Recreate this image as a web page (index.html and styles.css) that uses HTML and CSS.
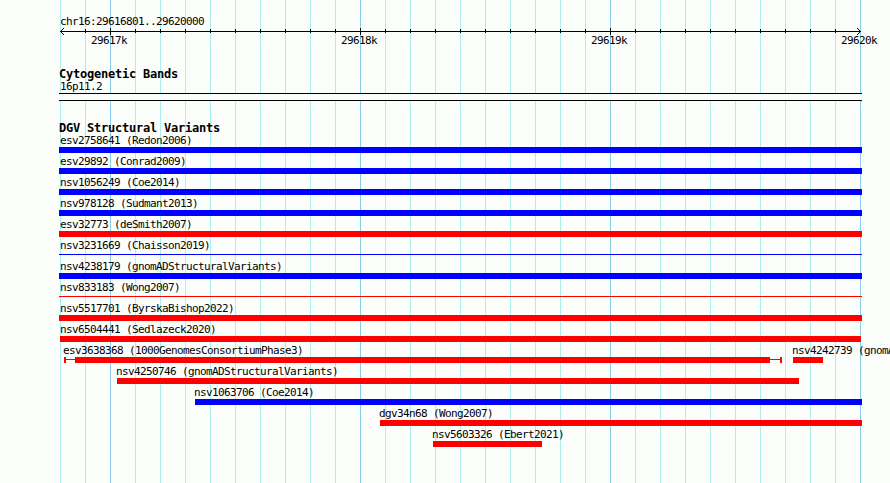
FILE: index.html
```html
<!DOCTYPE html>
<html lang="en">
<head>
    <meta charset="UTF-8">
    <title>chr16:29616801..29620000</title>
    <link rel="stylesheet" href="styles.css">
</head>
<body>
    <div class="browser">
        <div class="ruler">
            <div class="label">chr16:29616801..29620000</div>
            <svg class="axis" width="803" height="8" viewBox="59 27 803 8" shape-rendering="crispEdges">
                <rect x="60" y="31" width="801" height="1"/>
                <!-- minor ticks -->
                <line x1="85" y1="31" x2="860" y2="31" stroke="#000" stroke-width="4" stroke-dasharray="1 24"/>
                <!-- major ticks -->
                <line x1="110" y1="31.5" x2="800" y2="31.5" stroke="#000" stroke-width="7" stroke-dasharray="1 249"/>
                <!-- arrow heads -->
                <path d="M61 30h1v1h-1zM62 29h1v1h-1zM63 28h1v1h-1zM61 32h1v1h-1zM62 33h1v1h-1zM63 34h1v1h-1z"/>
                <path d="M859 30h1v1h-1zM858 29h1v1h-1zM857 28h1v1h-1zM859 32h1v1h-1zM858 33h1v1h-1zM857 34h1v1h-1z"/>
            </svg>
            <div class="ticks">
                <span>29617k</span>
                <span>29618k</span>
                <span>29619k</span>
                <span>29620k</span>
            </div>
        </div>

        <div class="track cytobands">
            <h2>Cytogenetic Bands</h2>
            <div class="label">16p11.2</div>
            <div class="band"></div>
        </div>

        <div class="track variants">
            <h2>DGV Structural Variants</h2>
            <div class="row">
                <div class="feature"><div class="label">esv2758641 (Redon2006)</div><div class="bar gain"></div></div>
            </div>
            <div class="row">
                <div class="feature"><div class="label">esv29892 (Conrad2009)</div><div class="bar gain"></div></div>
            </div>
            <div class="row">
                <div class="feature"><div class="label">nsv1056249 (Coe2014)</div><div class="bar gain"></div></div>
            </div>
            <div class="row">
                <div class="feature"><div class="label">nsv978128 (Sudmant2013)</div><div class="bar gain"></div></div>
            </div>
            <div class="row">
                <div class="feature"><div class="label">esv32773 (deSmith2007)</div><div class="bar loss"></div></div>
            </div>
            <div class="row">
                <div class="feature"><div class="label">nsv3231669 (Chaisson2019)</div><div class="bar gain thin"></div></div>
            </div>
            <div class="row">
                <div class="feature"><div class="label">nsv4238179 (gnomADStructuralVariants)</div><div class="bar gain"></div></div>
            </div>
            <div class="row">
                <div class="feature"><div class="label">nsv833183 (Wong2007)</div><div class="bar loss thin"></div></div>
            </div>
            <div class="row">
                <div class="feature"><div class="label">nsv5517701 (ByrskaBishop2022)</div><div class="bar loss"></div></div>
            </div>
            <div class="row">
                <div class="feature edge" style="margin-left: 1px; width: 801px"><div class="label">nsv6504441 (Sedlazeck2020)</div><div class="bar loss"></div></div>
            </div>
            <div class="row">
                <div class="feature inner" style="margin-left: 5px; width: 718px">
                    <div class="label">esv3638368 (1000GenomesConsortiumPhase3)</div>
                    <div class="range">
                        <div class="cap"></div>
                        <div class="whisker" style="width: 9px"></div>
                        <div class="bar loss"></div>
                        <div class="whisker" style="width: 10px"></div>
                        <div class="cap"></div>
                    </div>
                </div>
                <div class="feature inner" style="margin-left: 11px; width: 30px"><div class="label">nsv4242739 (gnomA</div><div class="bar loss"></div></div>
            </div>
            <div class="row">
                <div class="feature inner" style="margin-left: 58px; width: 682px"><div class="label">nsv4250746 (gnomADStructuralVariants)</div><div class="bar loss"></div></div>
            </div>
            <div class="row">
                <div class="feature inner" style="margin-left: 136px; width: 667px"><div class="label">nsv1063706 (Coe2014)</div><div class="bar gain"></div></div>
            </div>
            <div class="row">
                <div class="feature inner" style="margin-left: 321px; width: 482px"><div class="label">dgv34n68 (Wong2007)</div><div class="bar loss"></div></div>
            </div>
            <div class="row">
                <div class="feature inner" style="margin-left: 374px; width: 109px"><div class="label">nsv5603326 (Ebert2021)</div><div class="bar loss"></div></div>
            </div>
        </div>
    </div>
</body>
</html>
```
FILE: styles.css
```css
* {
    box-sizing: border-box;
}
body {
    margin: 0;
    background: #fcfefc;
    color: #000;
    font-family: "DejaVu Sans Mono", monospace;
    font-size: 11px;
    line-height: 13px;
}
.browser {
    width: 890px;
    height: 483px;
    padding: 15px 28px 0 59px;
    overflow: hidden;
    /* 1k lines over the 100bp lines */
    background-image:
        repeating-linear-gradient(to right, #87ceeb 0 1px, transparent 1px 250px),
        repeating-linear-gradient(to right, #afeeee 0 1px, transparent 1px 25px);
    background-position: 110px 0, 60px 0;
    background-size: 751px 100%, 801px 100%;
    background-repeat: no-repeat;
}
.label {
    height: 13px;
    padding-left: 1px;
    letter-spacing: -0.622px;
    white-space: nowrap;
}
.ruler {
    height: 53px;
}
.axis {
    display: block;
    margin-top: -1px;
}
.ticks {
    display: flex;
    gap: 214px;
    margin-top: -1px;
    padding-left: 32px;
    letter-spacing: -0.622px;
}
.ticks span {
    flex: none;
    width: 36px;
}
h2 {
    height: 12px;
    margin: 0;
    font-size: 12px;
    font-weight: bold;
    line-height: 13px;
    letter-spacing: -0.224px;
    white-space: nowrap;
}
.cytobands {
    height: 54px;
}
.band {
    height: 8px;
    border-top: 1px solid #000;
    border-bottom: 1px solid #000;
    background: #fcfefc;
}
.row {
    display: flex;
    height: 21px;
}
.feature {
    flex: none;
    width: 803px;
}
.edge .label {
    padding-left: 0;
}
.inner .label {
    padding-left: 0;
    margin-left: -1px;
}
.bar {
    height: 6px;
}
.gain {
    background: #0000ff;
}
.loss {
    background: #ff0000;
}
.thin {
    height: 1px;
    margin-top: 2px;
}
.range {
    display: flex;
    align-items: flex-start;
}
.range .bar {
    flex: 1;
}
.cap {
    width: 2px;
    height: 6px;
    background: #ff0000;
}
.whisker {
    height: 1px;
    margin-top: 2px;
    background: #ff0000;
}
```
